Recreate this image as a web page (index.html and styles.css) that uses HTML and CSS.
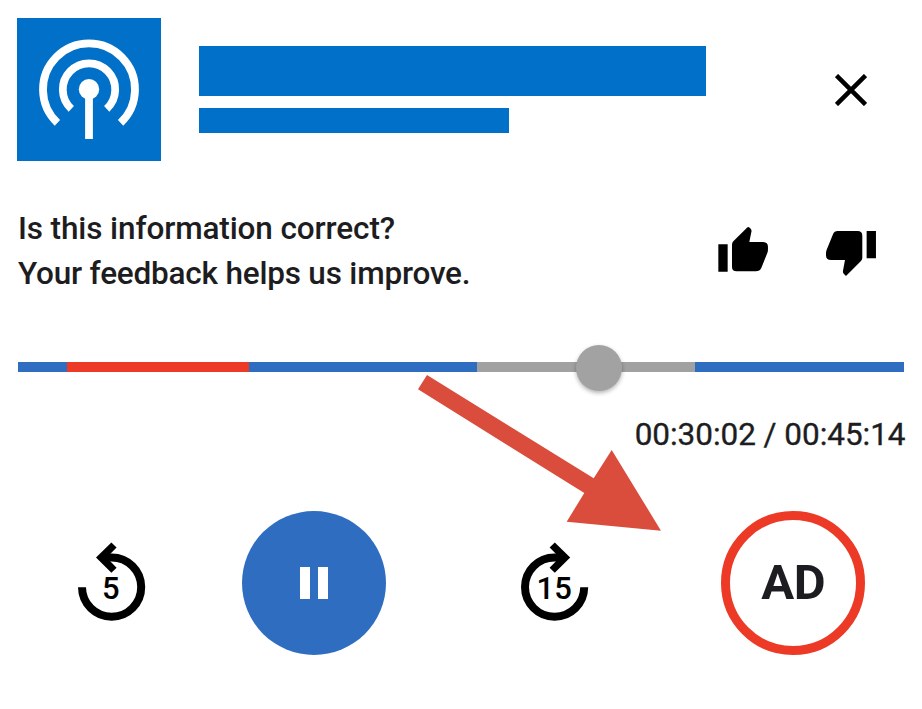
FILE: index.html
```html
<!DOCTYPE html>
<html lang="en">
<head>
<meta charset="utf-8">
<title>Podcast player</title>
<link rel="stylesheet" href="styles.css">
</head>
<body>
<main class="player">
  <header class="header">
    <svg class="cover" viewBox="0 0 144 143">
      <g fill="none" stroke="#fff" stroke-width="7.8">
        <path d="M40.4 104.8A46 46 0 1 1 103.6 104.8"/>
        <path d="M54.3 90.8A26.2 26.2 0 1 1 89.7 90.8"/>
        <path d="M72 71V121"/>
      </g>
      <circle cx="72" cy="71.3" r="10.2" fill="#fff"/>
    </svg>
    <div class="titles">
      <div class="title"></div>
      <div class="subtitle"></div>
    </div>
    <svg class="close" viewBox="0 0 32 32"><path d="M1.500 1.500L30.500 30.500M30.500 1.500L1.500 30.500"/></svg>
  </header>

  <section class="feedback">
    <p class="question"><span class="line-one">Is this information correct?</span><br><span class="line-two">Your feedback helps us improve.</span></p>
    <svg class="thumb" viewBox="54 45 151 153">
      <path d="M55 103H83V185H55ZM96 104Q96 98 100 94L138 56Q145 46 152 56Q156 60 154 67L148 96H190Q204 97 204 110V119Q204 124 202 129L184 174Q179 184 168 184H110Q96 184 96 170Z"/>
    </svg>
    <svg class="thumb" viewBox="377 45 151 153">
      <path d="M499 63H527V145H499ZM486 77Q486 63 472 63H412Q402 63 398 73L379 119Q377 124 377 130V137Q378 150 392 150H434L428 182Q427 188 431 192L437 198L482 153Q486 149 486 143Z"/>
    </svg>
  </section>

  <div class="track">
    <span class="segment played lead"></span>
    <span class="segment ad"></span>
    <span class="segment played middle"></span>
    <span class="segment skipped"></span>
    <span class="segment played tail"></span>
    <span class="knob"></span>
  </div>
  <div class="time">00:30:02 / 00:45:14</div>

  <div class="controls">
    <svg class="seek back" viewBox="0 0 68 80">
      <path class="ring" d="M4 45.3A29.6 29.6 0 1 0 33.6 15.5H25"/>
      <path d="M18 15.6L33.4 0.600L38.6 5.5L28.6 15.6L38.6 25.8L33.4 30.8Z"/>
      <text x="32.8" y="57.3">5</text>
    </svg>
    <div class="pause"><span></span><span></span></div>
    <svg class="seek forward" viewBox="0 0 68 80">
      <path class="ring" d="M63.2 45.3A29.6 29.6 0 1 1 33.6 15.5H42"/>
      <path d="M49.2 15.6L33.8 0.600L28.6 5.5L38.6 15.6L28.6 25.8L33.8 30.8Z"/>
      <text x="33.2" y="57.3">15</text>
    </svg>
    <div class="ad-button"><span>AD</span></div>
  </div>

  <svg class="pointer" viewBox="0 0 243 156">
    <path d="M9 0L175.700 103.300L193.700 75L243 155.700L148.700 146.700L166.300 118L0 14.300Z"/>
  </svg>
</main>
</body>
</html>
```

FILE: styles.css
```css
* { box-sizing: border-box; }

body {
  margin: 0;
  background: #fff;
  color: #1d1d21;
  font-family: Roboto, sans-serif;
}

.player {
  position: relative;
  display: flex;
  flex-direction: column;
  height: 709px;
  padding: 18px 17px 0;
  overflow: hidden;
}

.header { display: flex; height: 143px; }
.cover { width: 144px; height: 143px; background: #0070c8; }
.titles { margin: 28px 0 0 38px; }
.title { width: 507px; height: 50px; background: #0070c8; }
.subtitle { width: 310px; height: 25px; margin-top: 12px; background: #0070c8; }
.close { width: 32px; height: 32px; margin: 56px 0 0 129px; }
.close path { fill: none; stroke: #000; stroke-width: 4.5; }

.feedback { display: flex; height: 98px; margin-top: 44px; }
.question {
  width: 701px;
  margin: 0;
  padding: 1px 0 0 1px;
  font-size: 31.5px;
  font-weight: 500;
  line-height: 45px;
  white-space: nowrap;
}
.line-one { letter-spacing: -.12px; }
.line-two { letter-spacing: -.2px; }
.thumb { width: 50.300px; height: 51px; margin-top: 20px; }
.thumb + .thumb { margin-left: 57.500px; }

.track {
  position: relative;
  display: flex;
  width: 886px;
  height: 9.500px;
  margin: 59.400px 0 0 1px;
}
.segment { height: 100%; }
.played { background: #2f6dc1; }
.ad { width: 182px; background: #ed3a27; }
.skipped { width: 218px; background: #a1a1a1; }
.lead { width: 48.800px; }
.middle { width: 228.300px; }
.tail { flex: 1; }
.knob {
  position: absolute;
  top: -17.300px;
  left: 558px;
  width: 46px;
  height: 46px;
  border-radius: 50%;
  background: #a2a2a2;
  box-shadow: 0 2px 4px rgba(0, 0, 0, .3);
}

.time {
  align-self: flex-end;
  height: 46px;
  margin: 40px -.5px 0 0;
  font-size: 31.5px;
  line-height: 46px;
  letter-spacing: -.04px;
  white-space: nowrap;
  -webkit-text-stroke: .35px #1d1d21;
}

.controls { display: flex; height: 144px; margin-top: 53px; }
.seek { width: 68px; height: 80px; margin-top: 31.200px; }
.back { margin-left: 60.800px; }
.forward { margin-left: 134.700px; }
.ring { fill: none; stroke: #000; stroke-width: 8; }
.seek text { font-size: 31px; font-weight: 500; text-anchor: middle; }
.pause {
  display: flex;
  justify-content: center;
  align-items: center;
  gap: 8.500px;
  width: 144px;
  height: 144px;
  margin-left: 96.200px;
  border-radius: 50%;
  background: #2f6dc1;
}
.pause span { width: 9.500px; height: 32px; background: #fff; }
.ad-button {
  display: flex;
  justify-content: center;
  align-items: center;
  width: 144px;
  height: 144px;
  margin-left: 132.500px;
  border: 9.500px solid #ed3a27;
  border-radius: 50%;
  font-size: 49px;
  font-weight: 700;
}
.ad-button span { letter-spacing: -.5px; }

.pointer {
  position: absolute;
  top: 375px;
  left: 417.700px;
  width: 243px;
  height: 156px;
  fill: #da4c3c;
}
```
